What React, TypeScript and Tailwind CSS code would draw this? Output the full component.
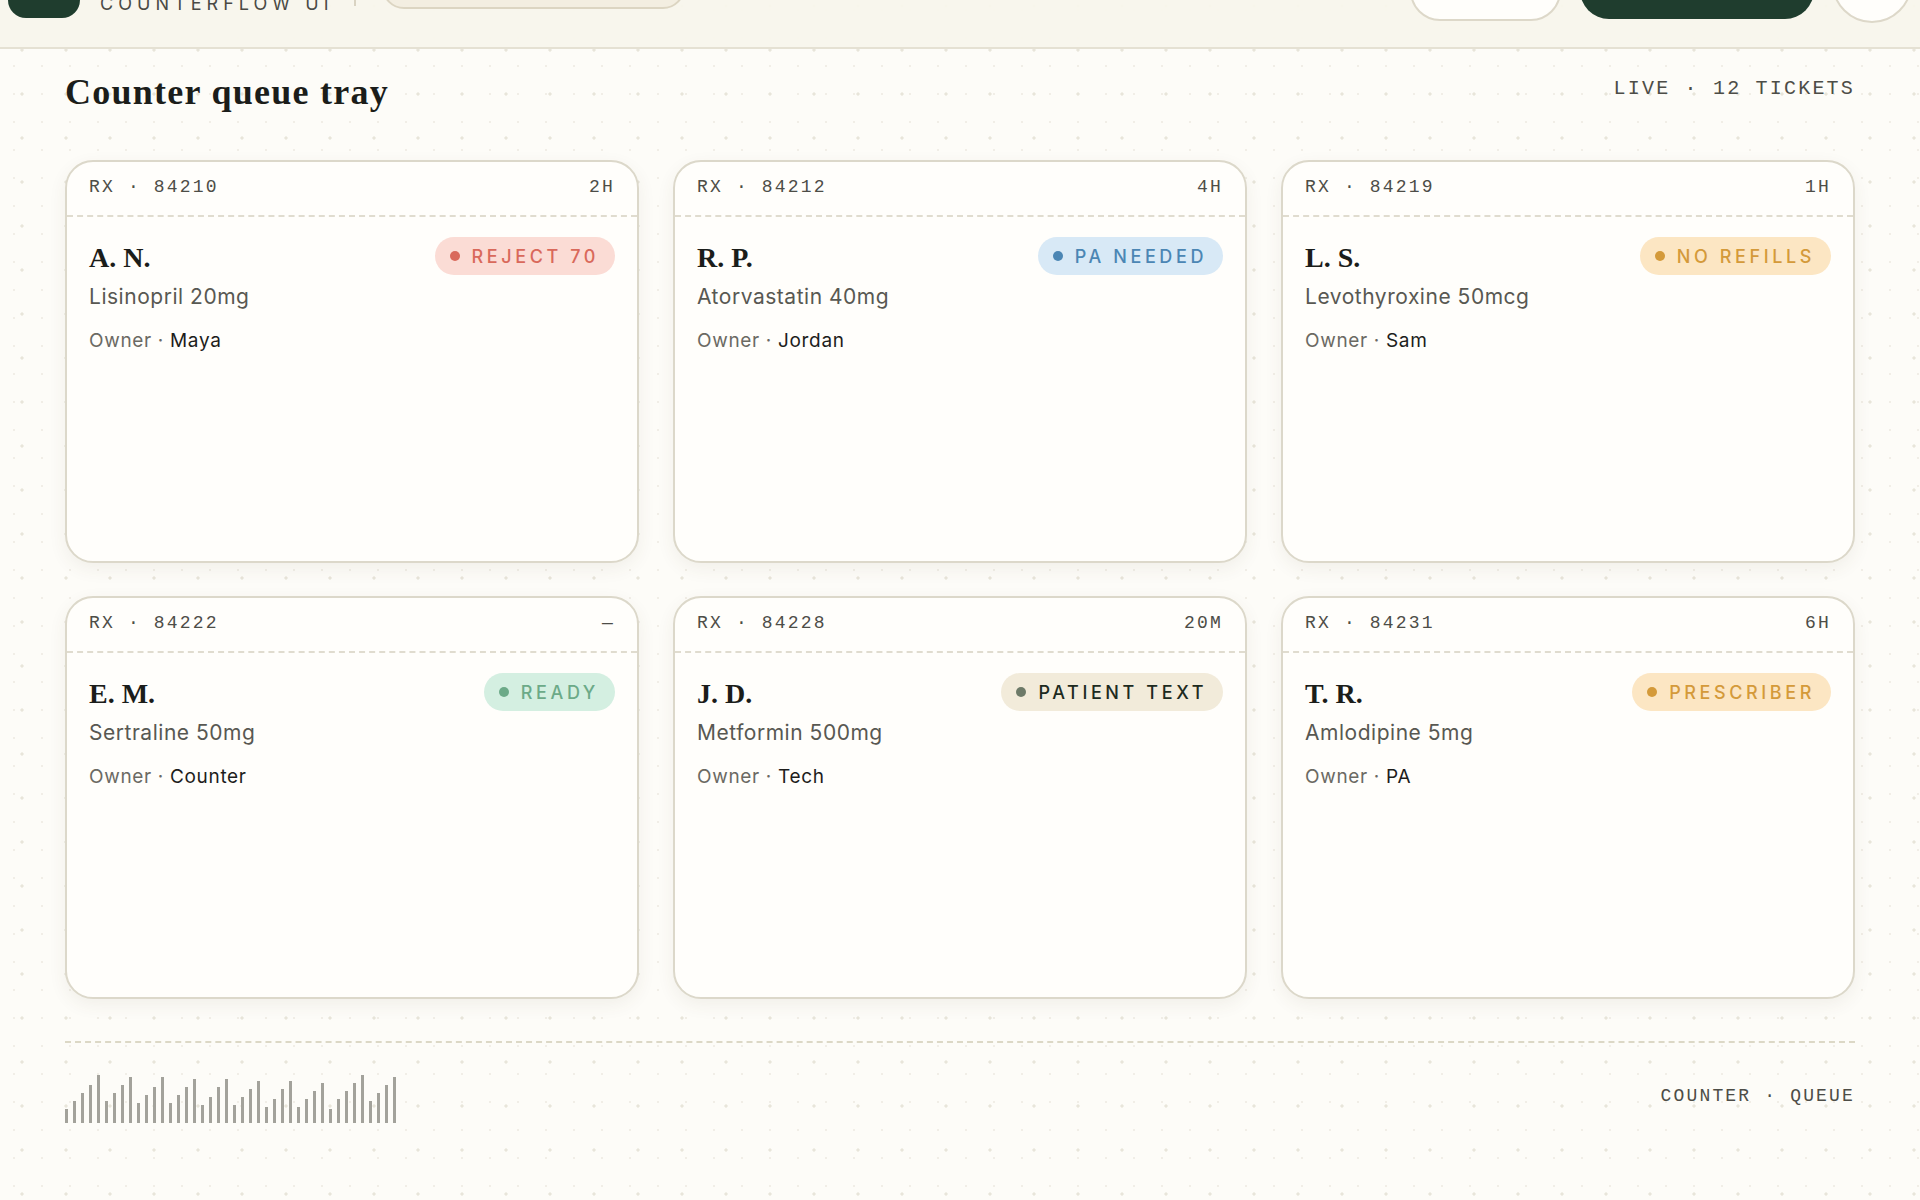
import React from "react";

type Tone = "red" | "blue" | "amber" | "green" | "neutral";

const tickets: {
  rx: string;
  age: string;
  name: string;
  drug: string;
  owner: string;
  status: string;
  tone: Tone;
}[] = [
  { rx: "84210", age: "2H", name: "A. N.", drug: "Lisinopril 20mg", owner: "Maya", status: "REJECT 70", tone: "red" },
  { rx: "84212", age: "4H", name: "R. P.", drug: "Atorvastatin 40mg", owner: "Jordan", status: "PA NEEDED", tone: "blue" },
  { rx: "84219", age: "1H", name: "L. S.", drug: "Levothyroxine 50mcg", owner: "Sam", status: "NO REFILLS", tone: "amber" },
  { rx: "84222", age: "—", name: "E. M.", drug: "Sertraline 50mg", owner: "Counter", status: "READY", tone: "green" },
  { rx: "84228", age: "20M", name: "J. D.", drug: "Metformin 500mg", owner: "Tech", status: "PATIENT TEXT", tone: "neutral" },
  { rx: "84231", age: "6H", name: "T. R.", drug: "Amlodipine 5mg", owner: "PA", status: "PRESCRIBER", tone: "amber" },
];

const toneClasses: Record<Tone, { pill: string; dot: string }> = {
  red: { pill: "bg-[#fbdcd5] text-[#d9695b]", dot: "bg-[#d9695b]" },
  blue: { pill: "bg-[#d8e9f6] text-[#4b86b4]", dot: "bg-[#4b86b4]" },
  amber: { pill: "bg-[#fce6c3] text-[#d49a3a]", dot: "bg-[#d49a3a]" },
  green: { pill: "bg-[#d4efe1] text-[#6caa88]", dot: "bg-[#6caa88]" },
  neutral: { pill: "bg-[#f2ebda] text-[#1d2a20]", dot: "bg-[#6d7a68]" },
};

const bars = [
  14, 22, 30, 38, 48, 22, 30, 38, 46, 20, 28, 36, 46, 20, 28, 36, 44, 18, 26, 36, 44,
  18, 26, 34, 42, 16, 24, 34, 42, 16, 24, 32, 40, 14, 24, 32, 40, 48, 22, 30, 38, 46,
];

function Card({ t }: { t: (typeof tickets)[number] }) {
  const tone = toneClasses[t.tone];
  return (
    <div className="h-[403px] rounded-[28px] border-2 border-[#dcd8ca] bg-[#fffefb] shadow-[0_6px_18px_rgba(80,70,40,0.07)] flex flex-col">
      <div className="h-[55px] pb-[3px] px-[22px] flex items-center justify-between border-b-2 border-dashed border-[#e0dccf] font-['Liberation_Mono',monospace] text-[18px] tracking-[0.12em] text-[#4d4d47]">
        <span>RX · {t.rx}</span>
        <span>{t.age}</span>
      </div>
      <div className="px-[22px] pt-[20px]">
        <div className="flex items-center justify-between h-[38px]">
          <span className="mt-[4px] font-['Liberation_Serif',serif] font-bold text-[28px] leading-[38px] text-[#1b1d1a]">
            {t.name}
          </span>
          <span
            className={`h-[38px] rounded-full pl-[15px] pr-[16px] flex items-center gap-[12px] font-['Inter',sans-serif] font-medium text-[18px] tracking-[0.2em] ${tone.pill}`}
          >
            <span className={`w-[10px] h-[10px] rounded-full ${tone.dot}`} />
            <span>{t.status}</span>
          </span>
        </div>
        <div className="mt-[8px] font-['Inter',sans-serif] text-[21px] leading-[28px] tracking-[0.025em] text-[#585852]">
          {t.drug}
        </div>
        <div className="mt-[17px] font-['Inter',sans-serif] text-[19px] leading-[26px] tracking-[0.035em] text-[#6b6a63]">
          Owner · <span className="text-[#1d1d1b]">{t.owner}</span>
        </div>
      </div>
    </div>
  );
}

export default function App() {
  return (
    <div className="-mt-[60px] min-h-[1280px] bg-[#fdfcf8] [background-image:radial-gradient(circle,#e8e5da_1.4px,transparent_1.8px),radial-gradient(circle,#f1eee7_1px,transparent_1.4px)] [background-size:44px_44px,28px_28px]">
      <header className="h-[109px] border-b-2 border-[#e5e1d3] bg-[#f8f5ec]/95 flex items-end justify-between pl-[8px] pr-[8px] pb-[24px]">
        <div className="flex items-end">
          <div className="w-[72px] h-[64px] rounded-[18px] bg-[#1f3d2e] mb-[5px]" />
          <div className="ml-[20px] flex flex-col mb-[7px]">
            <span className="font-['Liberation_Serif',serif] font-bold text-[22px] leading-[26px] text-[#1b1d1a]">Counterflow</span>
            <span className="font-['Inter',sans-serif] text-[18px] leading-[24px] tracking-[0.28em] text-[#4a4a45]">COUNTERFLOW UI</span>
          </div>
          <div className="ml-[20px] w-[2px] h-[40px] bg-[#d9d3c2] mb-[17px]" />
          <div className="ml-[26px] w-[303px] h-[44px] rounded-full border-2 border-[#dcd5c2] bg-[#f3eee1] mb-[14px]" />
        </div>
        <div className="flex items-end">
          <div className="w-[151px] h-[60px] rounded-full border-2 border-[#ddd8c9] bg-[#fffefb] mb-[2px]" />
          <div className="ml-[19px] w-[234px] h-[58px] rounded-full bg-[#1f3d2e] mb-[4px]" />
          <div className="ml-[18px] w-[80px] h-[80px] rounded-full border-2 border-[#ddd8c9] bg-[#fffefb]" />
        </div>
      </header>

      <main className="px-[65px]">
        <div className="flex items-start justify-between pt-[21px]">
          <h1 className="font-['Liberation_Serif',serif] font-bold text-[36px] leading-[44px] tracking-[0.035em] text-[#1b1d1a]">
            Counter queue tray
          </h1>
          <span className="mt-[5px] font-['Liberation_Mono',monospace] text-[20px] leading-[28px] tracking-[0.11em] text-[#4d4d47]">
            LIVE · 12 TICKETS
          </span>
        </div>

        <div className="mt-[46px] grid grid-cols-3 gap-x-[34px] gap-y-[33px]">
          {tickets.map((t) => (
            <Card key={t.rx} t={t} />
          ))}
        </div>

        <div className="mt-[42px] border-t-2 border-dashed border-[#dcd8c6] pt-[32px] flex items-center justify-between">
          <div className="flex items-end gap-[5px] h-[48px]">
            {bars.map((h, i) => (
              <div key={i} className="w-[3px] bg-[#a3a29b]" style={{ height: h }} />
            ))}
          </div>
          <span className="mb-[6px] font-['Liberation_Mono',monospace] text-[18px] tracking-[0.12em] text-[#4d4d47]">
            COUNTER · QUEUE
          </span>
        </div>
      </main>
    </div>
  );
}
